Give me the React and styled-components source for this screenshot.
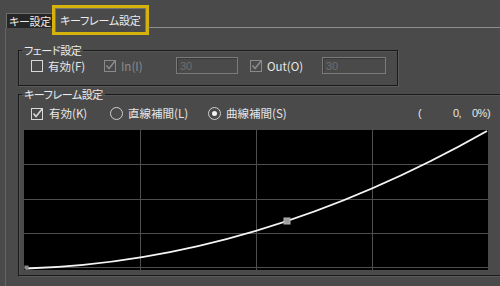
import React from 'react';
import styled, { createGlobalStyle } from 'styled-components';

const Global = createGlobalStyle`
  html, body { margin: 0; padding: 0; background: #4a4a4a; }
  body {
    width: 500px; height: 286px; overflow: hidden;
    font-family: "Noto Sans CJK JP", "Noto Sans", sans-serif;
    color: #e4e4e4;
  }
  * { box-sizing: border-box; }
`;

const Window = styled.div`
  width: 500px;
  height: 286px;
  background: #4a4a4a;
  overflow: hidden;
  display: flex;
  flex-direction: column;
`;

const TabStrip = styled.div`
  display: flex;
  align-items: flex-end;
  height: 28px;
  padding-left: 6px;
  flex-shrink: 0;
  position: relative;
  z-index: 1;
`;

const Tab = styled.div`
  width: 47px;
  height: 15px;
  background: #262626;
  border-top: 1px solid #6e6e6e;
  border-left: 1px solid #6e6e6e;
  padding: 0 0 0 2px;
  font-size: 11px;
  line-height: 14px;
  letter-spacing: -0.3px;
  font-feature-settings: "palt";
  color: #ececec;
  white-space: nowrap;
  overflow: hidden;
`;

const ActiveTab = styled.div`
  width: 91px;
  height: 24px;
  margin-left: 2px;
  margin-bottom: -4px;
  padding: 0 0 0 4px;
  background: #4a4a4a;
  border: 1px solid #747474;
  border-bottom: none;
  outline: 3px solid #d6b30c;
  font-size: 11px;
  line-height: 22px;
  letter-spacing: -0.2px;
  font-feature-settings: "palt";
  color: #ececec;
  white-space: nowrap;
  overflow: hidden;
`;

const TabLine = styled.div`
  flex: 1;
  border-bottom: 1px solid #8e8e8e;
  margin-left: 2px;
`;

const Panel = styled.div`
  flex: 1;
  border-left: 1px solid #646464;
  margin-left: 5px;
  padding-left: 12px;
  display: flex;
  flex-direction: column;
`;

const Group = styled.fieldset`
  margin: ${p => p.$top}px 0 0 0;
  padding: 0;
  width: ${p => p.$width}px;
  border: 1px solid #1a1a1a;
  box-shadow: inset 1px 1px 0 #555, 1px 1px 0 #5a5a5a;
  min-width: 0;
`;

const Legend = styled.legend`
  font-size: 11px;
  line-height: 14px;
  letter-spacing: -0.4px;
  padding: 0 2px;
  margin-left: 3px;
  font-feature-settings: "palt";
  color: #ececec;
`;

const FadeRow = styled.div`
  display: grid;
  grid-template-columns: 73px 72px 74px 72px 64px;
  align-items: center;
  height: 17px;
  padding-left: 12px;
  margin: 0 0 11px 0;
`;

const Check = styled.label`
  display: flex;
  align-items: center;
  gap: 4px;
  font-size: 11.5px;
  line-height: 14px;
  color: ${p => (p.$disabled ? '#8c8c8c' : '#e6e6e6')};
  white-space: nowrap;
`;

const BoxSvg = styled.svg`
  width: 13px;
  height: 13px;
  flex-shrink: 0;
  display: block;
`;

const Field = styled.input`
  width: ${p => p.$w}px;
  height: 17px;
  background: #4a4a4a;
  border: 1px solid #7a7a7a;
  box-shadow: inset 1px 1px 0 #3a3a3a;
  padding: 0 3px;
  font-family: "Liberation Sans", sans-serif;
  font-size: 11px;
  color: #6e6e6e;
  outline: none;
`;

const KeyBody = styled.div`
  padding: 0 5px 5px 5px;
`;

const KeyRow = styled.div`
  display: flex;
  align-items: center;
  width: 464px;
  height: 16px;
  margin: 4px 0 9px 0;
  padding-left: 7px;
`;

const Option = styled.label`
  display: flex;
  align-items: center;
  gap: 5px;
  width: ${p => p.$w}px;
  font-size: 11.5px;
  line-height: 14px;
  color: #e6e6e6;
  white-space: nowrap;
`;

const Radio = styled.span`
  width: 13px;
  height: 13px;
  border-radius: 50%;
  border: 1px solid #cfcfcf;
  display: flex;
  align-items: center;
  justify-content: center;
  flex-shrink: 0;
  &::after {
    content: '';
    width: 5px;
    height: 5px;
    border-radius: 50%;
    background: ${p => (p.$on ? '#f2f2f2' : 'transparent')};
  }
`;

const Readout = styled.div`
  margin-left: auto;
  display: grid;
  grid-template-columns: 35px 19px 16px;
  font-family: "Liberation Sans", sans-serif;
  font-size: 11px;
  color: #e6e6e6;
  letter-spacing: -0.5px;
`;

const Cell = styled.span`
  text-align: ${p => p.$align || 'left'};
`;

const Graph = styled.svg`
  display: block;
  width: 464px;
  height: 140px;
  background: #000;
`;

function CheckBox({ checked, disabled }) {
  const c = disabled ? '#8a8a8a' : '#d8d8d8';
  return (
    <BoxSvg viewBox="0 0 13 13">
      <rect x="0.5" y="1.5" width="11" height="11" fill="none" stroke={c} strokeWidth="1" />
      {checked && (
        <path d="M2.5 6.5 L5 9.5 L11.5 1.5" fill="none" stroke={c} strokeWidth="1.6" />
      )}
    </BoxSvg>
  );
}

export default function App() {
  const hLines = [34.5, 69.5, 103.5, 137.5];
  const vLines = [116.5, 232.5, 348.5];
  return (
    <Window>
      <Global />
      <TabStrip>
        <Tab>キー設定</Tab>
        <ActiveTab>キーフレーム設定</ActiveTab>
        <TabLine />
      </TabStrip>
      <Panel>
        <Group $top={15} $width={380}>
          <Legend>フェード設定</Legend>
          <FadeRow>
            <Check><CheckBox />有効(F)</Check>
            <Check $disabled><CheckBox checked disabled />In(I)</Check>
            <Field $w={62} disabled defaultValue="30" />
            <Check><CheckBox checked disabled />Out(O)</Check>
            <Field $w={64} disabled defaultValue="30" />
          </FadeRow>
        </Group>
        <Group $top={1} $width={500}>
          <Legend>キーフレーム設定</Legend>
          <KeyBody>
            <KeyRow>
              <Option $w={79}><CheckBox checked />有効(K)</Option>
              <Option $w={98}><Radio />直線補間(L)</Option>
              <Option $w={100}><Radio $on />曲線補間(S)</Option>
              <Readout>
                <Cell>(</Cell>
                <Cell>0,</Cell>
                <Cell $align="right">0%)</Cell>
              </Readout>
            </KeyRow>
            <Graph viewBox="0 0 464 140">
              {hLines.map(y => (
                <line key={y} x1="0" y1={y} x2="464" y2={y} stroke="#4e4e4e" strokeWidth="1" />
              ))}
              {vLines.map(x => (
                <line key={x} x1={x} y1="0" x2={x} y2="140" stroke="#4e4e4e" strokeWidth="1" />
              ))}
              <path d="M2 138.5 Q232.5 131.6 463 1" fill="none" stroke="#f4f4f4" strokeWidth="2" />
              <rect x="0.5" y="135.5" width="4" height="4" fill="#8c8c8c" />
              <rect x="260" y="88" width="6" height="6" fill="#9c9c9c" stroke="#b4b4b4" strokeWidth="1" />
            </Graph>
          </KeyBody>
        </Group>
      </Panel>
    </Window>
  );
}
